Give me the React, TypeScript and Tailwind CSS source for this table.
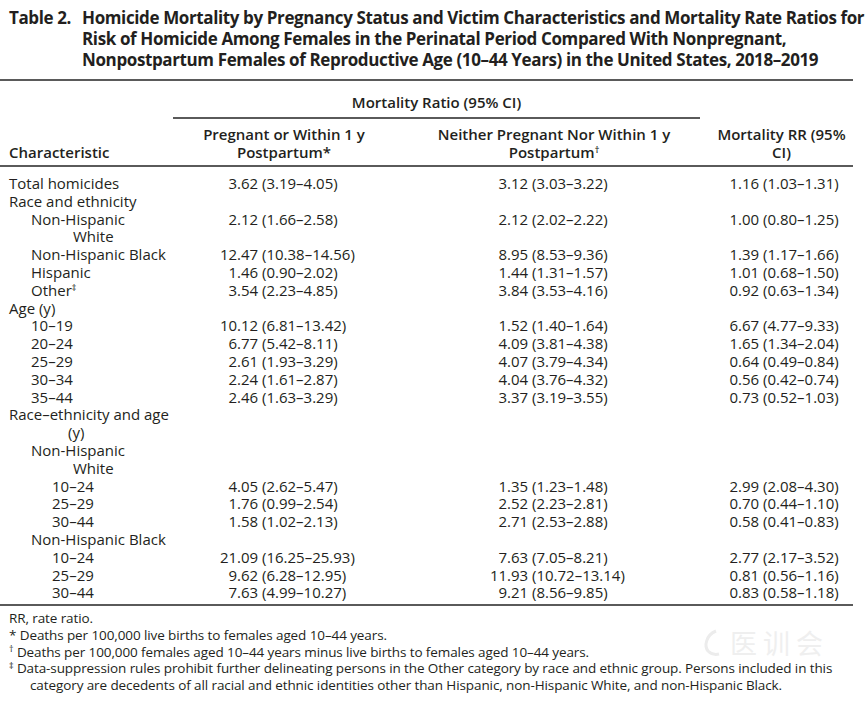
import React from "react";

type Row = {
  label: string[];
  indent: number;
  cont?: number;
  sup?: string;
  v?: [string, string, string];
};

const rows: Row[] = [
  { label: ["Total homicides"], indent: 9, v: ["3.62 (3.19–4.05)", "3.12 (3.03–3.22)", "1.16 (1.03–1.31)"] },
  { label: ["Race and ethnicity"], indent: 9 },
  { label: ["Non-Hispanic", "White"], indent: 31, cont: 73, v: ["2.12 (1.66–2.58)", "2.12 (2.02–2.22)", "1.00 (0.80–1.25)"] },
  { label: ["Non-Hispanic Black"], indent: 31, v: ["12.47 (10.38–14.56)", "8.95 (8.53–9.36)", "1.39 (1.17–1.66)"] },
  { label: ["Hispanic"], indent: 31, v: ["1.46 (0.90–2.02)", "1.44 (1.31–1.57)", "1.01 (0.68–1.50)"] },
  { label: ["Other"], indent: 31, sup: "‡", v: ["3.54 (2.23–4.85)", "3.84 (3.53–4.16)", "0.92 (0.63–1.34)"] },
  { label: ["Age (y)"], indent: 9 },
  { label: ["10–19"], indent: 31, v: ["10.12 (6.81–13.42)", "1.52 (1.40–1.64)", "6.67 (4.77–9.33)"] },
  { label: ["20–24"], indent: 31, v: ["6.77 (5.42–8.11)", "4.09 (3.81–4.38)", "1.65 (1.34–2.04)"] },
  { label: ["25–29"], indent: 31, v: ["2.61 (1.93–3.29)", "4.07 (3.79–4.34)", "0.64 (0.49–0.84)"] },
  { label: ["30–34"], indent: 31, v: ["2.24 (1.61–2.87)", "4.04 (3.76–4.32)", "0.56 (0.42–0.74)"] },
  { label: ["35–44"], indent: 31, v: ["2.46 (1.63–3.29)", "3.37 (3.19–3.55)", "0.73 (0.52–1.03)"] },
  { label: ["Race–ethnicity and age", "(y)"], indent: 9, cont: 68 },
  { label: ["Non-Hispanic", "White"], indent: 31, cont: 73 },
  { label: ["10–24"], indent: 52, v: ["4.05 (2.62–5.47)", "1.35 (1.23–1.48)", "2.99 (2.08–4.30)"] },
  { label: ["25–29"], indent: 52, v: ["1.76 (0.99–2.54)", "2.52 (2.23–2.81)", "0.70 (0.44–1.10)"] },
  { label: ["30–44"], indent: 52, v: ["1.58 (1.02–2.13)", "2.71 (2.53–2.88)", "0.58 (0.41–0.83)"] },
  { label: ["Non-Hispanic Black"], indent: 31 },
  { label: ["10–24"], indent: 52, v: ["21.09 (16.25–25.93)", "7.63 (7.05–8.21)", "2.77 (2.17–3.52)"] },
  { label: ["25–29"], indent: 52, v: ["9.62 (6.28–12.95)", "11.93 (10.72–13.14)", "0.81 (0.56–1.16)"] },
  { label: ["30–44"], indent: 52, v: ["7.63 (4.99–10.27)", "9.21 (8.56–9.85)", "0.83 (0.58–1.18)"] },
];

// whole part right-aligned so the decimals line up
const Value = ({ text }: { text: string }) => {
  const i = text.indexOf(".");
  return (
    <span className="whitespace-nowrap">
      <span className="inline-block w-[17px] text-right">{text.slice(0, i)}</span>
      {text.slice(i)}
    </span>
  );
};

const App = () => {
  return (
    <div className="relative w-[865px] h-[703px] bg-white text-[#231f20] overflow-hidden">
      <div className="w-[853px]">
        {/* caption */}
        <div
          className="flex pt-[7px] pl-[9px] text-[17px] leading-[21px] font-bold font-stretch-[92%] tracking-[-0.38px] whitespace-nowrap"
          style={{ fontFamily: '"Open Sans", sans-serif' }}
        >
          <span className="w-[73px] shrink-0">Table 2.</span>
          <span>
            Homicide Mortality by Pregnancy Status and Victim Characteristics and Mortality Rate Ratios for
            <br />
            Risk of Homicide Among Females in the Perinatal Period Compared With Nonpregnant,
            <br />
            Nonpostpartum Females of Reproductive Age (10–44 Years) in the United States, 2018–2019
          </span>
        </div>

        <div
          className="mt-[9px] text-[15px] leading-[17.8px]"
          style={{ fontFamily: '"Open Sans", "Noto Sans", sans-serif' }}
        >
          <div className="border-t-2 border-[#5a5a5a]" />

          {/* header */}
          <div className="grid grid-cols-[173px_222px_305px_153px] font-semibold">
            <div />
            <div className="col-span-2 text-center pt-[12px] pb-[6px] border-b-2 border-[#5a5a5a] leading-[18px]">
              Mortality Ratio (95% CI)
            </div>
            <div />
          </div>
          <div className="grid grid-cols-[173px_222px_305px_153px] font-semibold pt-[7px] pb-[4px] border-b-2 border-[#5a5a5a] leading-[17.5px] items-end">
            <div className="pl-[9px]">Characteristic</div>
            <div className="text-center">
              Pregnant or Within 1 y
              <br />
              Postpartum*
            </div>
            <div className="text-center pl-[13px]">
              Neither Pregnant Nor Within 1 y
              <br />
              Postpartum<sup className="text-[9px]">†</sup>
            </div>
            <div className="text-center pl-[10px]">
              Mortality RR (95%
              <br />
              CI)
            </div>
          </div>

          {/* body */}
          <div className="grid grid-cols-[173px_222px_305px_153px] pt-[8px] pb-[2px] border-b-2 border-[#5a5a5a]">
            {rows.map((r, idx) => (
              <React.Fragment key={idx}>
                <div className="whitespace-nowrap">
                  {r.label.map((l, j) => (
                    <div key={j} style={{ paddingLeft: j === 0 ? r.indent : r.cont }}>
                      {l}
                      {r.sup && j === 0 && <sup className="text-[9px]">{r.sup}</sup>}
                    </div>
                  ))}
                </div>
                <div className="pl-[47px]">{r.v && <Value text={r.v[0]} />}</div>
                <div className="pl-[95px]">{r.v && <Value text={r.v[1]} />}</div>
                <div className="pl-[21px]">{r.v && <Value text={r.v[2]} />}</div>
              </React.Fragment>
            ))}
          </div>
        </div>

        {/* footnotes */}
        <div
          className="pt-[4px] pl-[9px] text-[13.5px] leading-[16.7px] font-stretch-[91%] tracking-[-0.1px] whitespace-nowrap"
          style={{ fontFamily: '"Open Sans", sans-serif' }}
        >
          <div>RR, rate ratio.</div>
          <div>* Deaths per 100,000 live births to females aged 10–44 years.</div>
          <div>
            <sup className="text-[9px]">†</sup> Deaths per 100,000 females aged 10–44 years minus live births to females aged 10–44 years.
          </div>
          <div>
            <sup className="text-[9px]">‡</sup> Data-suppression rules prohibit further delineating persons in the Other category by race and ethnic group. Persons included in this
          </div>
          <div className="pl-[21px]">
            category are decedents of all racial and ethnic identities other than Hispanic, non-Hispanic White, and non-Hispanic Black.
          </div>
        </div>
      </div>

      {/* watermark */}
      <div className="absolute left-[702px] top-[626px] flex items-center gap-[10px] pointer-events-none">
        <svg width="18" height="30" viewBox="0 0 18 30" fill="none" stroke="#ececec" strokeWidth="3">
          <path d="M14 3 C4 7 2 18 6 23 C9 26 13 27 17 26" />
        </svg>
        <span
          className="text-[27px] leading-[34px] tracking-[6px] text-[#efefef]"
          style={{ fontFamily: '"Noto Sans CJK SC", sans-serif' }}
        >
          医训会
        </span>
      </div>
    </div>
  );
};

export default App;
